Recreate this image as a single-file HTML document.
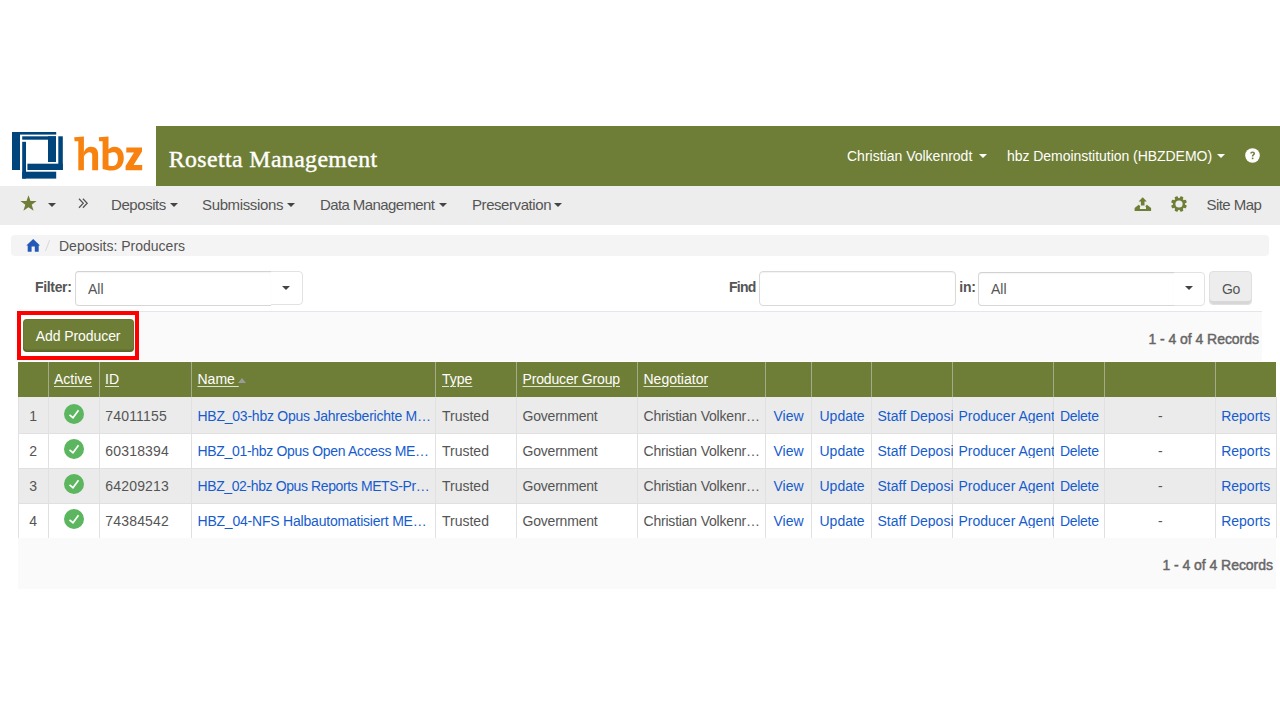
<!DOCTYPE html>
<html><head><meta charset="utf-8">
<style>
html,body{margin:0;padding:0;background:#fff;width:1280px;height:720px;overflow:hidden;}
body{position:relative;font-family:"Liberation Sans",sans-serif;font-size:14px;color:#555;}
.a{position:absolute;white-space:nowrap;line-height:1;}
#hdr{position:absolute;left:156px;top:126px;width:1124px;height:60px;background:#6f7e36;}
#nav{position:absolute;left:0;top:186px;width:1280px;height:39px;background:#ededed;}
#bc{position:absolute;left:11px;top:235px;width:1258px;height:21px;background:#f4f4f4;border-radius:4px;}
.sel{position:absolute;background:#fff;border:1px solid #dcdcdc;border-radius:4px;box-sizing:border-box;}
.sel .div{position:absolute;top:0;bottom:0;width:1px;background:#f3f3f3;}
.sl{position:absolute;background:#fff;border-top:1px solid #d2d2d2;border-bottom:1px solid #d6d6d6;border-left:1px solid #d8d8d8;border-radius:4px 0 0 4px;box-sizing:border-box;box-shadow:inset 0 1px 1px rgba(0,0,0,0.04);}
.caret{position:absolute;width:0;height:0;border-left:4px solid transparent;border-right:4px solid transparent;border-top:4.5px solid #444;}
#panel{position:absolute;left:17px;top:311px;width:1245px;height:50px;background:#fafafa;border-top:1px solid #e3e6eb;box-sizing:border-box;}
#red{position:absolute;left:17px;top:311px;width:122px;height:49px;border:4px solid #ff0000;box-sizing:border-box;background:#fff;}
#btn{position:absolute;left:23px;top:318.8px;width:111px;height:33.4px;background:#6f7e36;border-radius:4px;box-shadow:inset 0 -2.5px 0 rgba(0,0,0,0.13),inset 0 0 0 1px rgba(0,0,0,0.07);}
#thead{position:absolute;left:18px;top:362px;width:1258px;height:35px;background:#6f7e36;}
.vl{position:absolute;width:1px;background:#e1e1e1;}
.hvl{position:absolute;width:1px;background:#a5aa8d;top:362px;height:35px;}
.row{position:absolute;left:18px;width:1258px;height:35px;box-sizing:border-box;border-bottom:1px solid #e0e0e0;}
.th{color:#fff;text-decoration:underline;text-decoration-color:rgba(255,255,255,0.78);text-underline-offset:1.7px;font-size:14px;}
.lk{color:#165cce;}
#foot{position:absolute;left:18px;top:538px;width:1258px;height:50.7px;background:#fafafa;}
.chk{position:absolute;width:20px;height:20px;border-radius:50%;background:#5cb660;}
</style></head><body>

<!-- logo -->
<svg class="a" style="left:0;top:0" width="160" height="190" viewBox="0 0 160 190">
<g fill="#00447c">
<rect x="12" y="132" width="44.2" height="2.6"/>
<rect x="12" y="132" width="8" height="38"/>
<rect x="22.2" y="136.3" width="33.8" height="3.4"/>
<rect x="48" y="136.3" width="8" height="25.7"/>
<rect x="58.3" y="136.3" width="4.5" height="33.7"/>
<rect x="27.4" y="163.7" width="35.4" height="6.3"/>
<rect x="22.2" y="141.8" width="3.8" height="36.8"/>
<rect x="22.2" y="171.7" width="34" height="6.9"/>
</g>
<g fill="#f7820f">
<path d="M74.2,137.2 L83.9,136.6 L83.9,170.3 L78.3,170.3 L78.3,141.3 L74.6,141.3 Z"/>
<path d="M83.9,152 C85.2,148.6 88,146.7 91,146.7 C95.5,146.7 98.1,149.5 98.1,154 L98.1,170.3 L92.2,170.3 L92.2,155.5 C92.2,153.2 91.2,152.2 89.5,152.2 C87.3,152.2 85,154 83.9,156.5 Z"/>
<path fill-rule="evenodd" d="M98.8,137.2 L108.5,136.6 L108.5,149.5 C110,147.6 112,146.7 114.5,146.7 C120,146.7 123.8,151 123.8,158 C123.8,165.5 119,170.5 112,170.5 C108,170.5 105,169.8 102.6,169 L102.6,141.3 L99.2,141.3 Z M108.5,153.6 L108.5,165.6 C109.5,166 110.6,166.1 112,166.1 C116,166.1 117.9,163 117.9,158.5 C117.9,154.5 116.5,152.2 114,152.2 C111.6,152.2 109.6,152.8 108.5,153.6 Z"/>
<path d="M126.3,147.4 L142,147.4 L142,151.6 L133.6,165.1 L142.2,165.1 L142.2,170.3 L125.6,170.3 L125.6,166 L134,152.6 L126.3,152.6 Z"/>
</g>
</svg>

<div id="hdr"></div>
<div class="a" style="left:168.8px;top:148.3px;font-family:'Liberation Serif',serif;font-size:23.8px;letter-spacing:0.4px;color:#fff;-webkit-text-stroke:0.4px #fff;">Rosetta Management</div>
<div class="a" style="left:847px;top:148.5px;color:#fff;font-size:14px;">Christian Volkenrodt</div>
<div class="caret" style="left:978.5px;top:153.8px;border-top-color:#fff;"></div>
<div class="a" style="left:1007px;top:148.5px;color:#fff;font-size:14px;letter-spacing:-0.04px;">hbz Demoinstitution (HBZDEMO)</div>
<div class="caret" style="left:1217px;top:153.7px;border-top-color:#fff;"></div>
<svg class="a" style="left:1244.5px;top:147.6px" width="15" height="15" viewBox="0 0 15 15"><circle cx="7.5" cy="7.5" r="7.3" fill="#fff"/><path d="M5.2,5.6 C5.2,4.2 6.2,3.4 7.6,3.4 C9,3.4 10,4.2 10,5.4 C10,6.9 8.3,7 8.3,8.6 L6.8,8.6 C6.8,6.5 8.4,6.5 8.4,5.5 C8.4,5 8.1,4.7 7.6,4.7 C7,4.7 6.7,5.1 6.7,5.6 Z" fill="#6f7e36"/><rect x="6.8" y="9.6" width="1.6" height="1.6" fill="#6f7e36"/></svg>

<div id="nav"></div>
<svg class="a" style="left:20px;top:195px" width="17" height="17" viewBox="0 0 17 17"><path d="M8.5,0.2 L10.5,6.1 L16.6,6.1 L11.7,9.8 L13.6,15.8 L8.5,12.2 L3.4,15.8 L5.3,9.8 L0.4,6.1 L6.5,6.1 Z" fill="#6f7e36"/></svg>
<div class="caret" style="left:47.7px;top:203.1px;border-top-color:#444;"></div>
<svg class="a" style="left:78px;top:198px" width="11" height="11" viewBox="0 0 11 11"><path d="M1,0.8 L5.3,5.3 L1,9.8 M4.9,0.8 L9.2,5.3 L4.9,9.8" fill="none" stroke="#555" stroke-width="1.25"/></svg>
<div class="a" style="left:111px;top:197px;font-size:15px;letter-spacing:-0.43px;">Deposits</div>
<div class="caret" style="left:169.7px;top:203.2px;"></div>
<div class="a" style="left:202px;top:197px;font-size:15px;letter-spacing:-0.36px;">Submissions</div>
<div class="caret" style="left:286.8px;top:203.2px;"></div>
<div class="a" style="left:320px;top:197px;font-size:15px;letter-spacing:-0.6px;">Data Management</div>
<div class="caret" style="left:438.8px;top:203.2px;"></div>
<div class="a" style="left:472px;top:197px;font-size:15px;letter-spacing:-0.43px;">Preservation</div>
<div class="caret" style="left:554.2px;top:203.2px;"></div>

<svg class="a" style="left:1130px;top:192px" width="24" height="22" viewBox="0 0 24 22"><path fill="#6f7e36" d="M12.7,5.3 L16.8,9.4 L14.5,9.4 L14.5,13.6 L10.9,13.6 L10.9,9.4 L8.6,9.4 Z"/><path fill="#6f7e36" d="M8.7,12.8 L10.4,14.3 L9.9,15 L9.9,17 L16,17 L16,15 L15.3,14.3 L16.9,12.8 L21.1,16 L21.1,18.9 L4.6,18.9 L4.6,16 Z"/></svg>
<svg class="a" style="left:1170.9px;top:196.1px" width="16" height="16" viewBox="0 0 16 16"><g fill="#6f7e36"><circle cx="8" cy="8" r="6.1"/><rect x="6.35" y="0.1" width="3.3" height="4" rx="0.7" transform="rotate(22.5 8 8)"/><rect x="6.35" y="0.1" width="3.3" height="4" rx="0.7" transform="rotate(67.5 8 8)"/><rect x="6.35" y="0.1" width="3.3" height="4" rx="0.7" transform="rotate(112.5 8 8)"/><rect x="6.35" y="0.1" width="3.3" height="4" rx="0.7" transform="rotate(157.5 8 8)"/><rect x="6.35" y="0.1" width="3.3" height="4" rx="0.7" transform="rotate(202.5 8 8)"/><rect x="6.35" y="0.1" width="3.3" height="4" rx="0.7" transform="rotate(247.5 8 8)"/><rect x="6.35" y="0.1" width="3.3" height="4" rx="0.7" transform="rotate(292.5 8 8)"/><rect x="6.35" y="0.1" width="3.3" height="4" rx="0.7" transform="rotate(337.5 8 8)"/></g><circle cx="8" cy="8" r="3.6" fill="#ededed"/></svg>
<div class="a" style="left:1206.5px;top:197px;font-size:15px;letter-spacing:-0.55px;">Site Map</div>

<div id="bc"></div>
<svg class="a" style="left:26px;top:239px" width="15" height="14" viewBox="0 0 15 14"><path d="M7.2,0 L14,6.6 L12.7,6.6 L12.7,12.7 L8.8,12.7 L8.8,7.6 L5.6,7.6 L5.6,12.7 L1.7,12.7 L1.7,6.6 L0.3,6.6 Z" fill="#2559b8"/></svg>
<svg class="a" style="left:44px;top:239px" width="8" height="14" viewBox="0 0 8 14"><path d="M5.7,1.1 L1.5,12" stroke="#d4d4d4" stroke-width="0.9"/></svg>
<div class="a" style="left:59px;top:239px;font-size:14px;">Deposits: Producers</div>

<!-- filter row -->
<div class="a" style="left:35.1px;top:279.8px;font-weight:bold;font-size:14px;letter-spacing:-0.35px;">Filter:</div>
<div class="sel" style="left:75px;top:271px;width:227.5px;height:34px;border-color:#e2e2e2;"><div class="div" style="left:194px"></div></div><div class="sl" style="left:75px;top:271px;width:196px;height:35px;"></div>
<div class="a" style="left:88px;top:282px;font-size:14px;">All</div>
<div class="caret" style="left:281.5px;top:285.8px;"></div>

<div class="a" style="left:729px;top:279.8px;font-weight:bold;font-size:14px;letter-spacing:-0.75px;">Find</div>
<div class="sel" style="left:759.4px;top:271px;width:196.5px;height:34.5px;border-color:#d9d9d9;box-shadow:inset 0 1px 1px rgba(0,0,0,0.05);"></div>
<div class="a" style="left:959.3px;top:279.8px;font-weight:bold;font-size:14px;letter-spacing:-0.3px;">in:</div>
<div class="sel" style="left:978.2px;top:271.5px;width:227.3px;height:34px;border-color:#e2e2e2;"><div class="div" style="left:194px"></div></div><div class="sl" style="left:978.2px;top:271.5px;width:196px;height:34.5px;"></div>
<div class="a" style="left:991px;top:282px;font-size:14px;">All</div>
<div class="caret" style="left:1185px;top:286px;"></div>
<div class="sel" style="left:1209.2px;top:271.3px;width:42.6px;height:33.4px;background:#ededed;border-color:#e0e0e0;box-shadow:inset 0 -3px 0 rgba(0,0,0,0.09);"></div>
<div class="a" style="left:1222px;top:281.5px;font-size:14px;letter-spacing:-0.5px;">Go</div>

<div id="panel"></div>
<div class="a" style="left:1148.5px;top:331.5px;font-size:14px;color:#666;-webkit-text-stroke:0.45px #666;letter-spacing:-0.05px;">1 - 4 of 4 Records</div>
<div id="red"></div>
<div id="btn"></div>
<div class="a" style="left:35.8px;top:329.2px;color:#fff;font-size:14px;letter-spacing:-0.08px;">Add Producer</div>

<!-- table -->
<div id="thead"></div>
<div class="row" style="top:397px;height:36.5px;background:#ebebeb;"></div>
<div class="row" style="top:433.5px;background:#fff;"></div>
<div class="row" style="top:468.5px;background:#ebebeb;"></div>
<div class="row" style="top:503.5px;background:#fff;"></div>

<div id="vlines"></div>
<div class="hvl" style="left:48px"></div>
<div class="hvl" style="left:99px"></div>
<div class="hvl" style="left:191px"></div>
<div class="hvl" style="left:435px"></div>
<div class="hvl" style="left:516px"></div>
<div class="hvl" style="left:637px"></div>
<div class="hvl" style="left:765px"></div>
<div class="hvl" style="left:811px"></div>
<div class="hvl" style="left:871px"></div>
<div class="hvl" style="left:952px"></div>
<div class="hvl" style="left:1053px"></div>
<div class="hvl" style="left:1104px"></div>
<div class="hvl" style="left:1215px"></div>

<div class="vl" style="left:18px;top:397px;height:141px"></div>
<div class="vl" style="left:48px;top:397px;height:141px"></div>
<div class="vl" style="left:99px;top:397px;height:141px"></div>
<div class="vl" style="left:191px;top:397px;height:141px"></div>
<div class="vl" style="left:435px;top:397px;height:141px"></div>
<div class="vl" style="left:516px;top:397px;height:141px"></div>
<div class="vl" style="left:637px;top:397px;height:141px"></div>
<div class="vl" style="left:765px;top:397px;height:141px"></div>
<div class="vl" style="left:811px;top:397px;height:141px"></div>
<div class="vl" style="left:871px;top:397px;height:141px"></div>
<div class="vl" style="left:952px;top:397px;height:141px"></div>
<div class="vl" style="left:1053px;top:397px;height:141px"></div>
<div class="vl" style="left:1104px;top:397px;height:141px"></div>
<div class="vl" style="left:1215px;top:397px;height:141px"></div>
<div class="vl" style="left:1276px;top:397px;height:141px"></div>

<div class="a th" style="left:54px;top:372.3px;">Active</div>
<div class="a th" style="left:105px;top:372.3px;">ID</div>
<div class="a th" style="left:197.5px;top:372.3px;">Name&nbsp;</div>
<div class="a" style="left:237.8px;top:377.8px;width:0;height:0;border-left:4.8px solid transparent;border-right:4.8px solid transparent;border-bottom:5.2px solid #9a9a9a;"></div>
<div class="a th" style="left:442px;top:372.3px;">Type</div>
<div class="a th" style="left:522.5px;top:372.3px;letter-spacing:-0.15px;">Producer Group</div>
<div class="a th" style="left:643.5px;top:372.3px;">Negotiator</div>

<div id="rows"></div>
<div class="a" style="left:29.3px;top:409.15px;">1</div>
<svg class="a" style="left:64.2px;top:404.2px" width="20" height="20" viewBox="0 0 20 20"><circle cx="10" cy="10" r="10" fill="#5cb660"/><path d="M5.5,10.8 L9,13.7 L14.5,6.3" fill="none" stroke="#fff" stroke-width="1.7"/></svg>
<div class="a" style="left:105.2px;top:409.15px;letter-spacing:0.2px;">74011155</div>
<div class="a lk" style="left:197.5px;top:409.15px;letter-spacing:-0.24px;">HBZ_03-hbz Opus Jahresberichte M…</div>
<div class="a" style="left:442px;top:409.15px;">Trusted</div>
<div class="a" style="left:522.5px;top:409.15px;letter-spacing:-0.2px;">Government</div>
<div class="a" style="left:643.5px;top:409.15px;letter-spacing:-0.2px;">Christian Volkenr…</div>
<div class="a lk" style="left:773.5px;top:409.15px;">View</div>
<div class="a lk" style="left:819.5px;top:409.15px;">Update</div>
<div class="a lk" style="left:877.5px;top:409.15px;width:75px;overflow:hidden;">Staff Deposits</div>
<div class="a lk" style="left:958.5px;top:409.15px;width:95px;overflow:hidden;">Producer Agents</div>
<div class="a lk" style="left:1060px;top:409.15px;letter-spacing:-0.3px;">Delete</div>
<div class="a" style="left:1158px;top:409.15px;">-</div>
<div class="a lk" style="left:1221.2px;top:409.15px;">Reports</div>
<div class="a" style="left:29.3px;top:444.15px;">2</div>
<svg class="a" style="left:64.2px;top:439.2px" width="20" height="20" viewBox="0 0 20 20"><circle cx="10" cy="10" r="10" fill="#5cb660"/><path d="M5.5,10.8 L9,13.7 L14.5,6.3" fill="none" stroke="#fff" stroke-width="1.7"/></svg>
<div class="a" style="left:105.2px;top:444.15px;letter-spacing:0.2px;">60318394</div>
<div class="a lk" style="left:197.5px;top:444.15px;letter-spacing:-0.32px;">HBZ_01-hbz Opus Open Access ME…</div>
<div class="a" style="left:442px;top:444.15px;">Trusted</div>
<div class="a" style="left:522.5px;top:444.15px;letter-spacing:-0.2px;">Government</div>
<div class="a" style="left:643.5px;top:444.15px;letter-spacing:-0.2px;">Christian Volkenr…</div>
<div class="a lk" style="left:773.5px;top:444.15px;">View</div>
<div class="a lk" style="left:819.5px;top:444.15px;">Update</div>
<div class="a lk" style="left:877.5px;top:444.15px;width:75px;overflow:hidden;">Staff Deposits</div>
<div class="a lk" style="left:958.5px;top:444.15px;width:95px;overflow:hidden;">Producer Agents</div>
<div class="a lk" style="left:1060px;top:444.15px;letter-spacing:-0.3px;">Delete</div>
<div class="a" style="left:1158px;top:444.15px;">-</div>
<div class="a lk" style="left:1221.2px;top:444.15px;">Reports</div>
<div class="a" style="left:29.3px;top:479.15px;">3</div>
<svg class="a" style="left:64.2px;top:474.2px" width="20" height="20" viewBox="0 0 20 20"><circle cx="10" cy="10" r="10" fill="#5cb660"/><path d="M5.5,10.8 L9,13.7 L14.5,6.3" fill="none" stroke="#fff" stroke-width="1.7"/></svg>
<div class="a" style="left:105.2px;top:479.15px;letter-spacing:0.2px;">64209213</div>
<div class="a lk" style="left:197.5px;top:479.15px;letter-spacing:-0.39px;">HBZ_02-hbz Opus Reports METS-Pr…</div>
<div class="a" style="left:442px;top:479.15px;">Trusted</div>
<div class="a" style="left:522.5px;top:479.15px;letter-spacing:-0.2px;">Government</div>
<div class="a" style="left:643.5px;top:479.15px;letter-spacing:-0.2px;">Christian Volkenr…</div>
<div class="a lk" style="left:773.5px;top:479.15px;">View</div>
<div class="a lk" style="left:819.5px;top:479.15px;">Update</div>
<div class="a lk" style="left:877.5px;top:479.15px;width:75px;overflow:hidden;">Staff Deposits</div>
<div class="a lk" style="left:958.5px;top:479.15px;width:95px;overflow:hidden;">Producer Agents</div>
<div class="a lk" style="left:1060px;top:479.15px;letter-spacing:-0.3px;">Delete</div>
<div class="a" style="left:1158px;top:479.15px;">-</div>
<div class="a lk" style="left:1221.2px;top:479.15px;">Reports</div>
<div class="a" style="left:29.3px;top:514.15px;">4</div>
<svg class="a" style="left:64.2px;top:509.2px" width="20" height="20" viewBox="0 0 20 20"><circle cx="10" cy="10" r="10" fill="#5cb660"/><path d="M5.5,10.8 L9,13.7 L14.5,6.3" fill="none" stroke="#fff" stroke-width="1.7"/></svg>
<div class="a" style="left:105.2px;top:514.15px;letter-spacing:0.2px;">74384542</div>
<div class="a lk" style="left:197.5px;top:514.15px;letter-spacing:-0.21px;">HBZ_04-NFS Halbautomatisiert ME…</div>
<div class="a" style="left:442px;top:514.15px;">Trusted</div>
<div class="a" style="left:522.5px;top:514.15px;letter-spacing:-0.2px;">Government</div>
<div class="a" style="left:643.5px;top:514.15px;letter-spacing:-0.2px;">Christian Volkenr…</div>
<div class="a lk" style="left:773.5px;top:514.15px;">View</div>
<div class="a lk" style="left:819.5px;top:514.15px;">Update</div>
<div class="a lk" style="left:877.5px;top:514.15px;width:75px;overflow:hidden;">Staff Deposits</div>
<div class="a lk" style="left:958.5px;top:514.15px;width:95px;overflow:hidden;">Producer Agents</div>
<div class="a lk" style="left:1060px;top:514.15px;letter-spacing:-0.3px;">Delete</div>
<div class="a" style="left:1158px;top:514.15px;">-</div>
<div class="a lk" style="left:1221.2px;top:514.15px;">Reports</div>
<!--/rowsend-->

<div id="foot"></div>
<div class="a" style="left:1162.5px;top:558.4px;font-size:14px;color:#666;-webkit-text-stroke:0.45px #666;letter-spacing:-0.05px;">1 - 4 of 4 Records</div>

</body></html>
